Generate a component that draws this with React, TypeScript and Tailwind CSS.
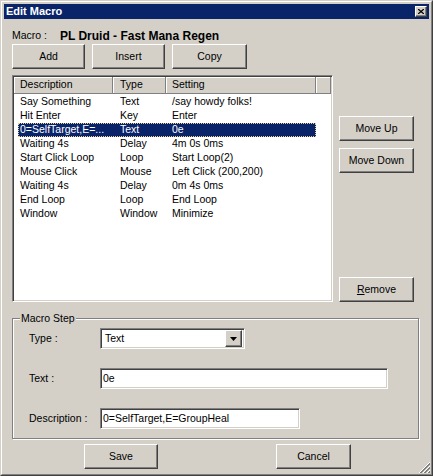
import React from "react";

const raised =
  "border border-t-white border-l-white border-r-[#404040] border-b-[#404040] shadow-[inset_-1px_-1px_0_#808080] bg-[#d4d0c8]";
const sunken =
  "border border-t-[#808080] border-l-[#808080] border-r-white border-b-white shadow-[inset_1px_1px_0_#404040,inset_-1px_-1px_0_#d4d0c8]";

const rows = [
  ["Say Something", "Text", "/say howdy folks!"],
  ["Hit Enter", "Key", "Enter"],
  ["0=SelfTarget,E=...", "Text", "0e"],
  ["Waiting 4s", "Delay", "4m 0s 0ms"],
  ["Start Click Loop", "Loop", "Start Loop(2)"],
  ["Mouse Click", "Mouse", "Left Click (200,200)"],
  ["Waiting 4s", "Delay", "0m 4s 0ms"],
  ["End Loop", "Loop", "End Loop"],
  ["Window", "Window", "Minimize"],
];

function Btn({ w, children }: { w: string; children: React.ReactNode }) {
  return (
    <button className={`${raised} ${w} h-[25px] flex items-center justify-center text-black font-normal`}>
      {children}
    </button>
  );
}

function Head({ w, pl, children }: { w: string; pl: string; children?: React.ReactNode }) {
  return (
    <div
      className={`${w} ${pl} h-full flex items-center border-r border-b border-r-[#808080] border-b-[#808080] shadow-[inset_1px_1px_0_#fff]`}
    >
      {children}
    </div>
  );
}

export default function App() {
  return (
    <div
      className="relative w-[433px] h-[476px] bg-[#d4d0c8] border border-t-[#d4d0c8] border-l-[#d4d0c8] border-r-[#404040] border-b-[#404040] text-[10.5px] text-black"
      style={{ fontFamily: '"Liberation Sans", Arial, sans-serif' }}
    >
      <div className="h-full border border-t-white border-l-white border-r-[#808080] border-b-[#808080] p-[2px] flex flex-col">
        {/* title bar */}
        <div className="h-[15px] bg-[#0a246a] flex items-center pl-[2px] pr-[2px]">
          <span className="text-white font-bold text-[11px] leading-none">Edit Macro</span>
          <div className={`${raised} ml-auto w-[12px] h-[11px] flex items-center justify-center`}>
            <svg width="6" height="5" viewBox="0 0 6 5">
              <path d="M0 0 L6 5 M6 0 L0 5" stroke="#000" strokeWidth="1.3" />
            </svg>
          </div>
        </div>

        <div className="flex flex-col pl-[8px]">
          {/* macro name */}
          <div className="mt-[10px] h-[13px] flex items-center">
            <span className="w-[48px]">Macro :</span>
            <span className="font-bold text-[12px]">PL Druid - Fast Mana Regen</span>
          </div>

          {/* top buttons */}
          <div className="mt-[2px] flex gap-[7px]">
            <Btn w="w-[73px]">Add</Btn>
            <Btn w="w-[73px]">Insert</Btn>
            <Btn w="w-[75px]">Copy</Btn>
          </div>

          {/* list + side buttons */}
          <div className="mt-[6px] flex">
            <div className={`${sunken} w-[321px] h-[227px] bg-white p-[1px] flex flex-col`}>
              <div className="h-[17px] flex bg-[#d4d0c8]">
                <Head w="w-[99px]" pl="pl-[6px]">Description</Head>
                <Head w="w-[53px]" pl="pl-[7px]">Type</Head>
                <Head w="w-[150px]" pl="pl-[6px]">Setting</Head>
                <Head w="flex-1" pl="" />
              </div>
              <div className="pt-[1px] flex flex-col">
                {rows.map((r, i) => {
                  const sel = i === 2;
                  return (
                    <div
                      key={i}
                      className={`ml-[4px] w-[298px] h-[14px] flex items-center ${
                        sel ? "bg-[#0a246a] text-white outline-1 outline-dotted outline-[#e8d28a] -outline-offset-1" : ""
                      }`}
                    >
                      <span className="w-[95px] pl-[2px] whitespace-nowrap overflow-hidden">{r[0]}</span>
                      <span className="w-[53px] pl-[7px] whitespace-nowrap">{r[1]}</span>
                      <span className="w-[150px] pl-[6px] whitespace-nowrap">{r[2]}</span>
                    </div>
                  );
                })}
              </div>
            </div>

            <div className="ml-[6px] flex flex-col">
              <div className="mt-[41px]">
                <Btn w="w-[75px]">Move Up</Btn>
              </div>
              <div className="mt-[7px]">
                <Btn w="w-[75px]">Move Down</Btn>
              </div>
              <div className="mt-auto">
                <Btn w="w-[75px]">
                  <span>
                    <span className="underline">R</span>emove
                  </span>
                </Btn>
              </div>
            </div>
          </div>

          {/* group box */}
          <div className="relative mt-[16px] w-[407px] h-[121px] border border-[#808080] shadow-[inset_1px_1px_0_#fff,1px_1px_0_#fff] flex flex-col pl-[16px]">
            <span className="absolute -top-[7px] left-[7px] px-[1px] bg-[#d4d0c8] leading-[13px]">Macro Step</span>

            <div className="mt-[9px] flex items-center h-[21px]">
              <span className="w-[71px]">Type :</span>
              <div className={`${sunken} w-[145px] h-[21px] bg-white flex items-center p-[2px]`}>
                <span className="pl-[2px] flex-1">Text</span>
                <div className={`${raised} w-[17px] h-[17px] flex items-center justify-center`}>
                  <svg width="7" height="4" viewBox="0 0 7 4">
                    <path d="M0 0 H7 L3.5 4 Z" fill="#000" />
                  </svg>
                </div>
              </div>
            </div>

            <div className="mt-[19px] flex items-center h-[21px]">
              <span className="w-[71px]">Text :</span>
              <div className={`${sunken} w-[288px] h-[21px] bg-white flex items-center pl-[2px]`}>0e</div>
            </div>

            <div className="mt-[19px] flex items-center h-[21px]">
              <span className="w-[71px]">Description :</span>
              <div className={`${sunken} w-[200px] h-[21px] bg-white flex items-center pl-[2px]`}>
                0=SelfTarget,E=GroupHeal
              </div>
            </div>
          </div>

          {/* bottom buttons */}
          <div className="mt-[5px] flex ml-[72px] gap-[118px]">
            <Btn w="w-[74px]">Save</Btn>
            <Btn w="w-[75px]">Cancel</Btn>
          </div>
        </div>
      </div>

      {/* resize grip */}
      <svg className="absolute right-[2px] bottom-[2px]" width="12" height="12" viewBox="0 0 12 12" shapeRendering="crispEdges">
        {[0, 4, 8].map((o) => (
          <g key={o}>
            <path d={`M${o + 1} 12 L12 ${o + 1}`} stroke="#fff" strokeWidth="1" />
            <path d={`M${o + 2} 12 L12 ${o + 2}`} stroke="#808080" strokeWidth="1" />
            <path d={`M${o + 3} 12 L12 ${o + 3}`} stroke="#808080" strokeWidth="1" />
          </g>
        ))}
      </svg>
    </div>
  );
}
